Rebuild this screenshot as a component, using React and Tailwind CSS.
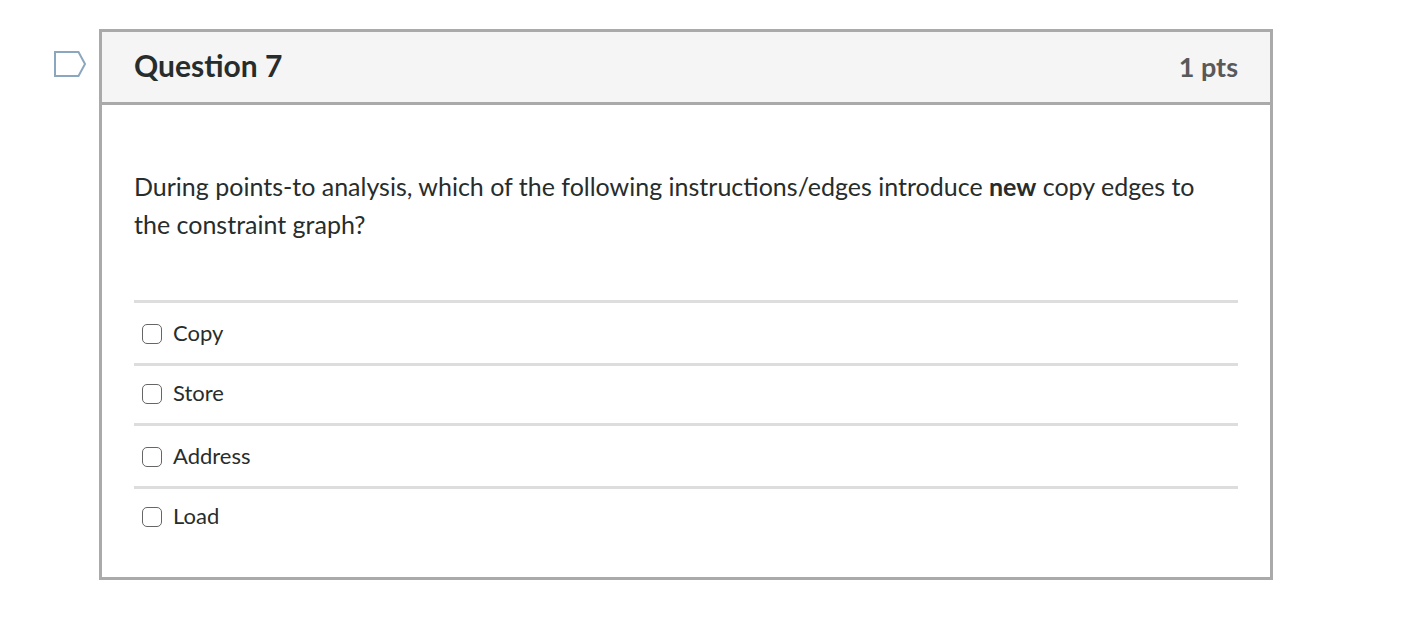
const answers = ["Copy", "Store", "Address", "Load"];

function FlagButton() {
  return (
    <button type="button" aria-label="Flag question" className="mt-5 block h-7 w-8 shrink-0">
      <svg viewBox="0 0 32 28" fill="none" className="h-7 w-8">
        <path d="M1 3H24.5L31 15L24.5 27H1Z" stroke="#8ba6bf" strokeWidth="2" />
      </svg>
    </button>
  );
}

function Answer({ label }) {
  const id = `answer-${label.toLowerCase()}`;
  return (
    <div className="flex items-center border-t-3 border-[#dddddd] pt-3 pb-3 pl-2 even:pt-[9px]">
      <input
        id={id}
        type="checkbox"
        className="mt-0.5 size-5 shrink-0 appearance-none rounded-[5px] border border-[#666666] bg-white checked:bg-[#0075ff]"
      />
      <label htmlFor={id} className="pl-[11px] text-[22px] leading-9">
        {label}
      </label>
    </div>
  );
}

export default function App() {
  return (
    <main className="flex items-start gap-[13px] pt-[29px] pr-[135px] pl-[54px] font-['Lato',sans-serif] text-[#272d2c]">
      <FlagButton />
      <section className="min-w-0 flex-1 border-3 border-[#aaaaaa] bg-white">
        <header className="flex items-start justify-between border-b-3 border-[#aaaaaa] bg-[#f5f5f5] px-8 py-4">
          <h1 className="text-[30px] leading-[34px] font-bold">Question 7</h1>
          <span className="text-[27px] leading-[38px] font-bold text-[#595959]">1 pts</span>
        </header>
        <div className="px-8 pt-[62px] pb-[31px]">
          <p className="pr-6 text-[25px] leading-[38px]">
            During points-to analysis, which of the following instructions/edges introduce <strong>new</strong> copy edges to the constraint graph?
          </p>
          <div className="mt-[57px]">
            {answers.map((label) => (
              <Answer key={label} label={label} />
            ))}
          </div>
        </div>
      </section>
    </main>
  );
}
